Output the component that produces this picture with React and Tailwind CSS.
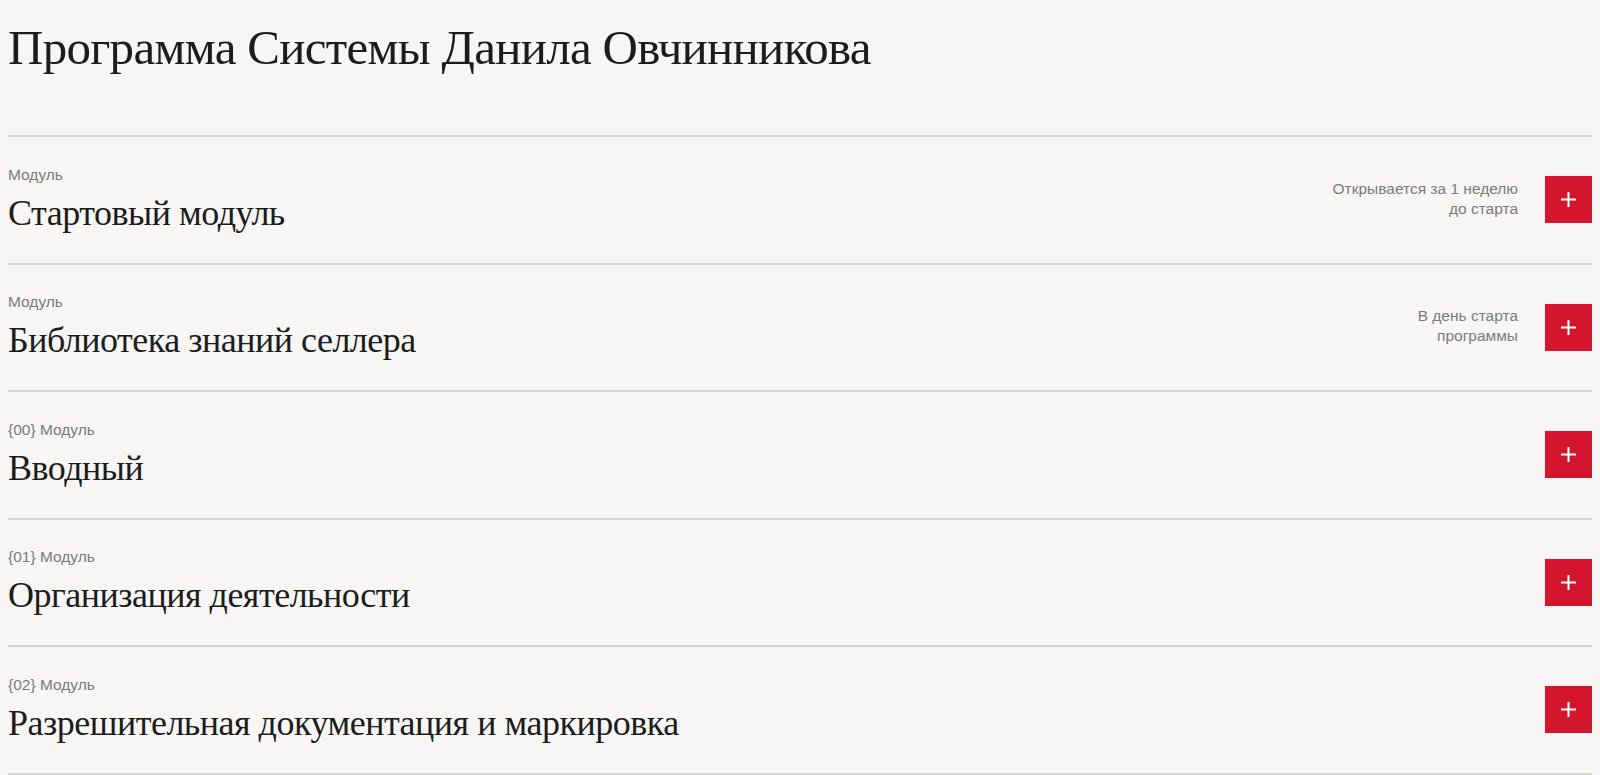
const modules = [
  { label: 'Модуль', title: 'Стартовый модуль', note: ['Открывается за 1 неделю', 'до старта'] },
  { label: 'Модуль', title: 'Библиотека знаний селлера', note: ['В день старта', 'программы'] },
  { label: '{00} Модуль', title: 'Вводный' },
  { label: '{01} Модуль', title: 'Организация деятельности' },
  { label: '{02} Модуль', title: 'Разрешительная документация и маркировка' },
]

function PlusButton() {
  return (
    <button className="w-[47px] h-[47px] bg-[#d3152d] flex items-center justify-center shrink-0">
      <svg width="15" height="15" viewBox="0 0 15 15" fill="none" stroke="#fff" strokeWidth="2">
        <path d="M7.5 0v15M0 7.5h15" />
      </svg>
    </button>
  )
}

export default function App() {
  return (
    <div className="min-h-screen bg-[#f7f6f4] px-2 text-[#1c1c1c]">
      <h1 className="pt-[23px] pb-[62px] text-[49px] leading-[50px] tracking-[-0.72px] font-['Liberation_Serif',serif] font-normal">
        Программа Системы Данила Овчинникова
      </h1>

      <div className="border-b-2 border-[#d6d4d1]">
        {modules.map((m, i) => (
          <div key={i} className="border-t-2 border-[#d6d4d1] flex items-center justify-between pt-[27.5px] pb-[28px]">
            <div>
              <div className="text-[15.5px] leading-5 text-[#7b7b7b] font-['Liberation_Sans',Arial,sans-serif]">
                {m.label}
              </div>
              <div className="mt-[7.1px] text-[36px] leading-[43px] tracking-[-0.5px] font-['Liberation_Serif',serif]">
                {m.title}
              </div>
            </div>

            <div className="flex items-center gap-[27px]">
              {m.note && (
                <div className="text-right text-[15.5px] leading-5 text-[#7b7b7b] font-['Liberation_Sans',Arial,sans-serif] -translate-y-px">
                  {m.note[0]}<br />{m.note[1]}
                </div>
              )}
              <PlusButton />
            </div>
          </div>
        ))}
      </div>
    </div>
  )
}
